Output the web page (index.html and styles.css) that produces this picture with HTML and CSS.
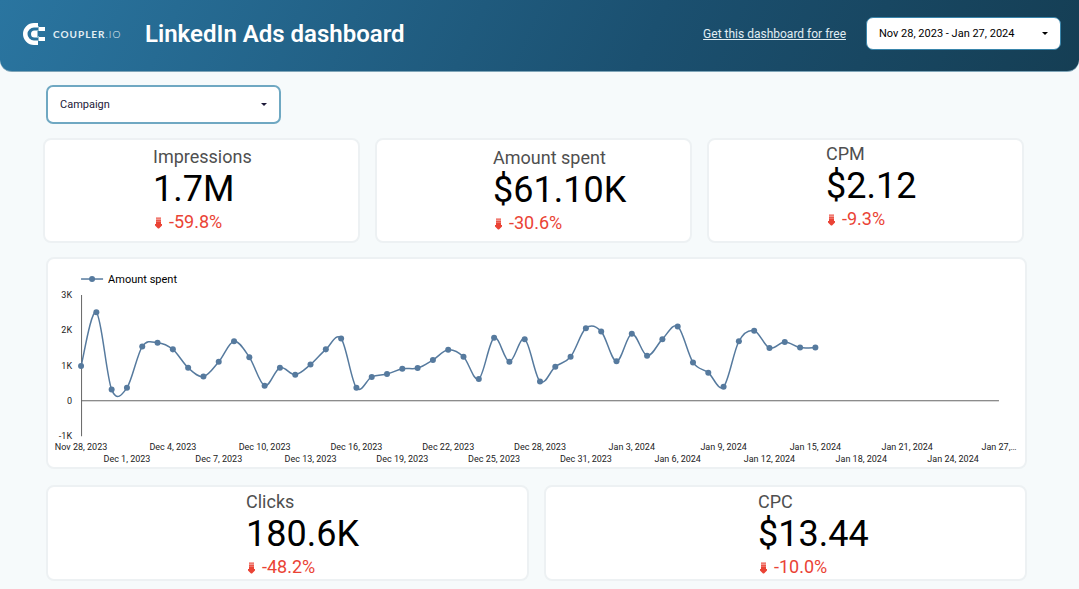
FILE: index.html
```
<!DOCTYPE html>
<html lang="en">
<head>
    <meta charset="UTF-8">
    <meta name="viewport" content="width=device-width, initial-scale=1.0">
    <title>LinkedIn Ads dashboard</title>
    <link rel="stylesheet" href="styles.css">
</head>
<body>

<!-- Trend arrow shared by all scorecards -->
<svg class="sprite" aria-hidden="true">
    <symbol id="arrow-down" viewBox="0 0 10 12">
        <rect x="3" y="0" width="5" height="1" opacity="0.45"/>
        <rect x="3" y="1" width="5" height="1" opacity="0.7"/>
        <rect x="3" y="2" width="5" height="1" opacity="0.55"/>
        <rect x="3" y="3" width="5" height="1" opacity="0.9"/>
        <rect x="3" y="4" width="5" height="1" opacity="0.75"/>
        <path d="M3 5H8V7H9V8.500L6 11.500H5L2 8.500V7H3Z"/>
    </symbol>
</svg>

<header class="header">
    <div class="logo">
        <svg class="logo-mark" viewBox="0 0 22 22" aria-hidden="true">
            <path fill="#fff" d="M15 0V4.500H11A6.500 6.500 0 0 0 11 17.500H15V22H11A11 11 0 0 1 11 0Z"/>
            <path fill="#fff" d="M16 4H22V8H16ZM16 14H22V18H16Z"/>
            <path fill="#fff" d="M14.500 7.500V14.500H11.500A3.500 3.500 0 0 1 11.500 7.500Z"/>
            <path fill="#8fbfd2" d="M15 3H16V8H15V9H14V7H15ZM14 13H16V18H15V15H14Z"/>
        </svg>
        <span class="logo-text">COUPLER<span class="logo-io">.IO</span></span>
    </div>
    <h1>LinkedIn Ads dashboard</h1>
    <a class="header-link" href="#">Get this dashboard for free</a>
    <div class="select date-select">
        <select aria-label="Date range">
            <option>Nov 28, 2023 - Jan 27, 2024</option>
        </select>
    </div>
</header>

<main>
    <div class="select campaign-select">
        <select aria-label="Campaign">
            <option>Campaign</option>
        </select>
    </div>

    <section class="row row-top">
        <div class="card impressions">
            <div class="label">Impressions</div>
            <div class="value">1.7M</div>
            <div class="change"><svg><use href="#arrow-down"/></svg>-59.8%</div>
        </div>
        <div class="card spent">
            <div class="label">Amount spent</div>
            <div class="value">$61.10K</div>
            <div class="change"><svg><use href="#arrow-down"/></svg>-30.6%</div>
        </div>
        <div class="card cpm">
            <div class="label">CPM</div>
            <div class="value">$2.12</div>
            <div class="change"><svg><use href="#arrow-down"/></svg>-9.3%</div>
        </div>
    </section>

    <section class="card chart-card">
        <svg id="chart" class="chart" viewBox="0 0 976 208" role="img" aria-label="Amount spent by day"></svg>
    </section>

    <section class="row row-bottom">
        <div class="card clicks">
            <div class="label">Clicks</div>
            <div class="value">180.6K</div>
            <div class="change"><svg><use href="#arrow-down"/></svg>-48.2%</div>
        </div>
        <div class="card cpc">
            <div class="label">CPC</div>
            <div class="value">$13.44</div>
            <div class="change"><svg><use href="#arrow-down"/></svg>-10.0%</div>
        </div>
    </section>
</main>

<script src="chart.js"></script>
</body>
</html>
```
FILE: styles.css
```
* {
    box-sizing: border-box;
}

body {
    margin: 0;
    font-family: Roboto, Arial, sans-serif;
    background-color: #f6fafb;
    color: #000;
}

.sprite {
    display: none;
}

.header {
    display: flex;
    align-items: center;
    height: 72px;
    padding: 0 18px 4px 23px;
    background: linear-gradient(115deg, #2a75a0, #1b5070 60%, #153e54);
    border-bottom: 1px solid #7fa5b8;
    border-radius: 0 0 12px 12px;
}

.logo {
    display: flex;
    align-items: center;
    gap: 8px;
    width: 122px;
}

.logo-mark {
    width: 22px;
    height: 22px;
}

.logo-text {
    font-family: Lato, sans-serif;
    font-size: 10px;
    font-weight: 700;
    letter-spacing: 1px;
    color: #e3eef4;
}

.logo-io {
    font-weight: 300;
}

h1 {
    margin: 0;
    font-size: 24px;
    font-weight: 600;
    color: #fff;
}

.header-link {
    margin-left: auto;
    margin-right: 20px;
    font-size: 12px;
    color: #e1edf3;
}

.select {
    position: relative;
    background-color: #fff;
    border: 2px solid #6fa8c2;
    border-radius: 7px;
}

.select select {
    width: 100%;
    height: 100%;
    padding: 0 12px;
    border: none;
    background: none;
    appearance: none;
    font-family: inherit;
    font-size: 11px;
    color: inherit;
}

/* drop-down caret */
.select::after {
    content: "";
    position: absolute;
    right: 12px;
    top: 50%;
    margin-top: -2px;
    border: 3px solid transparent;
    border-top-color: currentColor;
    border-bottom: none;
    pointer-events: none;
}

.date-select {
    width: 195px;
    height: 33px;
    border: 1px solid #3985ab;
}

.campaign-select {
    width: 235px;
    height: 39px;
    color: #1c1838;
}

main {
    padding: 13px 52px 8px 46px;
}

.row {
    display: grid;
    gap: 15px;
}

.row-top {
    grid-template-columns: repeat(3, 1fr);
    margin: 14px 3px 14px -3px;
}

.row-bottom {
    grid-template-columns: repeat(2, 1fr);
    margin-top: 16px;
}

.card {
    background-color: #fff;
    border: 2px solid #edf1f3;
    border-radius: 8px;
}

.impressions {
    padding: 6px 0 8px 108px;
}

.spent {
    padding: 7px 0 7px 116px;
}

.cpm {
    padding: 3px 0 11px 117px;
}

.clicks {
    padding: 4px 0 1px 198px;
}

.cpc {
    padding: 4px 0 1px 212px;
}

.label {
    font-size: 18px;
    line-height: 22px;
    color: #4f4f4f;
}

.value {
    font-size: 36px;
    line-height: 43px;
}

.change {
    display: flex;
    align-items: center;
    gap: 6px;
    font-size: 18px;
    line-height: 22px;
    color: #ea4335;
}

.change svg {
    width: 10px;
    height: 12px;
    margin-top: 2px;
    fill: #ea4335;
}

.chart {
    display: block;
    width: 100%;
}

.chart text {
    font-size: 9px;
    fill: #222;
}

.chart .legend {
    font-size: 11px;
    fill: #000;
}

.chart .axis {
    stroke: #666;
}

.chart .line {
    fill: none;
    stroke: #567a9e;
    stroke-width: 1.5;
}

.chart circle {
    fill: #567a9e;
}
```
FILE: chart.js
```
const SPENT = [
    990, 2510, 320, 370, 1540, 1650, 1460, 940, 690, 1110,
    1690, 1240, 430, 940, 740, 1030, 1460, 1770, 370, 680,
    760, 910, 930, 1160, 1450, 1250, 620, 1790, 1110, 1750,
    550, 970, 1250, 2060, 1970, 1120, 1900, 1280, 1750, 2110,
    1090, 800, 400, 1690, 1990, 1500, 1670, 1510, 1510
];
const START = new Date(2023, 10, 28);
const DAYS = 60;
const LEFT = 33;
const RIGHT = 950;
const TOP = 36;
const BOTTOM = 177;

const chart = document.getElementById('chart');
const x = day => LEFT + day * (RIGHT - LEFT) / DAYS;
const y = value => TOP + (3000 - value) * (BOTTOM - TOP) / 4000;

function add(tag, attrs, text) {
    const el = document.createElementNS('http://www.w3.org/2000/svg', tag);
    Object.entries(attrs).forEach(([key, value]) => el.setAttribute(key, value));
    if (text) el.textContent = text;
    chart.appendChild(el);
}

// Smooth curve, tangent at each point is parallel to its neighbours
function curve(points) {
    let d = `M${points[0]}`;
    for (let i = 0; i < points.length - 1; i++) {
        const p0 = points[i - 1] || points[i];
        const p1 = points[i];
        const p2 = points[i + 1];
        const p3 = points[i + 2] || p2;
        const c1 = [p1[0] + (p2[0] - p0[0]) / 6, p1[1] + (p2[1] - p0[1]) / 6];
        const c2 = [p2[0] - (p3[0] - p1[0]) / 6, p2[1] - (p3[1] - p1[1]) / 6];
        d += `C${c1} ${c2} ${p2}`;
    }
    return d;
}

// Legend
add('path', { class: 'line', d: 'M33 20H55' });
add('circle', { cx: 44, cy: 20, r: 3 });
add('text', { class: 'legend', x: 60, y: 24 }, 'Amount spent');

// Axes
add('path', { class: 'axis', d: `M${LEFT + 0.5} ${TOP}V${BOTTOM}` });
add('path', { class: 'axis', d: `M${LEFT} ${Math.round(y(0)) - 0.5}H${RIGHT}` });
[3, 2, 1, 0, -1].forEach(k => {
    add('text', { x: 24, y: y(k * 1000) + 3, 'text-anchor': 'end' }, k === 0 ? '0' : `${k}K`);
});

for (let day = 0; day <= DAYS; day += 3) {
    const date = new Date(START);
    date.setDate(date.getDate() + day);
    const label = date.toLocaleDateString('en-US', { month: 'short', day: 'numeric', year: 'numeric' });
    add('text', {
        x: x(day),
        y: day % 6 === 0 ? 191 : 203,
        'text-anchor': 'middle'
    }, day === DAYS ? label.replace(' 2024', '…') : label);
}

// Series
const points = SPENT.map((value, day) => [x(day), y(value)]);
add('path', { class: 'line', d: curve(points) });
points.forEach(([cx, cy]) => add('circle', { cx, cy, r: 3 }));
```
